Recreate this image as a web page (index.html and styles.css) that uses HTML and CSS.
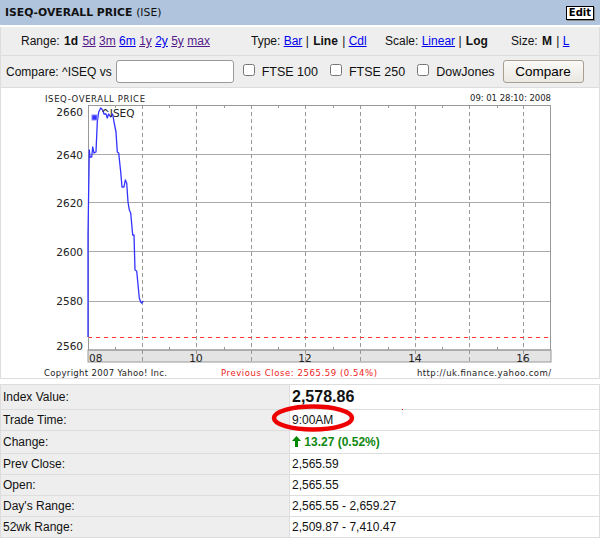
FILE: index.html
```html
<!DOCTYPE html>
<html>
<head>
    <meta charset="UTF-8">
    <title>ISEQ-OVERALL PRICE</title>
    <link rel="stylesheet" href="styles.css">
</head>
<body>
<div class="page">
    <div class="header">
        <h1>ISEQ-OVERALL PRICE <span>(ISE)</span></h1>
        <button class="edit">Edit</button>
    </div>

    <div class="controls">
        <div class="row range-row">
            <div class="group g-range">Range: <b>1d</b>
                <a class="v" href="#">5d</a> <a class="v" href="#">3m</a> <a href="#">6m</a>
                <a class="v" href="#">1y</a> <a href="#">2y</a> <a class="v" href="#">5y</a> <a class="v" href="#">max</a>
            </div>
            <div class="group g-type">Type: <a href="#">Bar</a> | <b>Line</b> | <a href="#">Cdl</a></div>
            <div class="group g-scale">Scale: <a href="#">Linear</a> | <b>Log</b></div>
            <div class="group">Size: <b>M</b> | <a href="#">L</a></div>
        </div>
        <div class="row compare-row">
            <label>Compare: ^ISEQ vs</label>
            <input type="text" class="compare-input">
            <label class="check"><input type="checkbox"> FTSE 100</label>
            <label class="check"><input type="checkbox"> FTSE 250</label>
            <label class="check"><input type="checkbox"> DowJones</label>
            <button class="compare-btn">Compare</button>
        </div>
    </div>

    <div class="chart">
        <svg width="597" height="291" viewBox="1 88 597 291">
            <g class="small">
                <text x="45" y="102" textLength="100">ISEQ-OVERALL PRICE</text>
                <text x="551" y="101" text-anchor="end" textLength="81">09: 01 28:10: 2008</text>
            </g>
            <rect x="88" y="350" width="463" height="12" fill="#e4e4e4" stroke="#999"/>
            <g stroke="#aaa" stroke-width="1">
                <line x1="88" y1="154.5" x2="551" y2="154.5"/>
                <line x1="88" y1="202.5" x2="551" y2="202.5"/>
                <line x1="88" y1="251.5" x2="551" y2="251.5"/>
                <line x1="88" y1="301.5" x2="551" y2="301.5"/>
            </g>
            <g stroke="#999" stroke-dasharray="4 3">
                <line x1="142.5" y1="105" x2="142.5" y2="362"/>
                <line x1="196.5" y1="105" x2="196.5" y2="362"/>
                <line x1="251.5" y1="105" x2="251.5" y2="362"/>
                <line x1="305.5" y1="105" x2="305.5" y2="362"/>
                <line x1="360.5" y1="105" x2="360.5" y2="362"/>
                <line x1="415.5" y1="105" x2="415.5" y2="362"/>
                <line x1="469.5" y1="105" x2="469.5" y2="362"/>
                <line x1="523.5" y1="105" x2="523.5" y2="362"/>
            </g>
            <g stroke="#999">
                <line x1="115.5" y1="105" x2="115.5" y2="108"/><line x1="115.5" y1="347" x2="115.5" y2="350"/>
                <line x1="169.5" y1="105" x2="169.5" y2="108"/><line x1="169.5" y1="347" x2="169.5" y2="350"/>
                <line x1="224.5" y1="105" x2="224.5" y2="108"/><line x1="224.5" y1="347" x2="224.5" y2="350"/>
                <line x1="278.5" y1="105" x2="278.5" y2="108"/><line x1="278.5" y1="347" x2="278.5" y2="350"/>
                <line x1="333.5" y1="105" x2="333.5" y2="108"/><line x1="333.5" y1="347" x2="333.5" y2="350"/>
                <line x1="388.5" y1="105" x2="388.5" y2="108"/><line x1="388.5" y1="347" x2="388.5" y2="350"/>
                <line x1="442.5" y1="105" x2="442.5" y2="108"/><line x1="442.5" y1="347" x2="442.5" y2="350"/>
                <line x1="497.5" y1="105" x2="497.5" y2="108"/><line x1="497.5" y1="347" x2="497.5" y2="350"/>
            </g>
            <line x1="88" y1="337.5" x2="551" y2="337.5" stroke="#ff3333" stroke-dasharray="4 4"/>
            <rect x="88.5" y="105.5" width="462" height="244.5" fill="none" stroke="#999"/>
            <g class="axis" text-anchor="end">
                <text x="83" y="116">2660</text>
                <text x="83" y="159">2640</text>
                <text x="83" y="207">2620</text>
                <text x="83" y="256">2600</text>
                <text x="83" y="305">2580</text>
                <text x="83" y="350">2560</text>
            </g>
            <g class="axis" text-anchor="middle">
                <text x="89" y="362" text-anchor="start">08</text>
                <text x="196" y="362">10</text>
                <text x="305" y="362">12</text>
                <text x="415" y="362">14</text>
                <text x="523" y="362">16</text>
            </g>
            <polyline fill="none" stroke="#3333ff" stroke-width="1.3" stroke-linejoin="round"
                points="88,337 88,235 89.3,150 90,157 91.7,157 92.7,147 94,153 96,152 97.3,122 98.7,112 100.7,108 102.7,110 104,114 106,114 107.3,118 108.7,114 110.7,117 112.7,114 114,122 116,132 117.3,152 118.7,153 120.7,172 122,187 124,187 125.3,180 126.7,183 128,202 129.3,210 130.7,213 132.7,235 134,235 135,270 136.7,271 139.3,298 140.7,302 141.7,303 143.3,301"/>
            <rect x="92" y="115" width="5" height="5" fill="#3333ff" stroke="#88f"/>
            <text class="axis" x="101" y="117">^ISEQ</text>
            <g class="small">
                <text x="44" y="376" textLength="123">Copyright 2007 Yahoo! Inc.</text>
                <text x="221" y="376" fill="#ee2222" textLength="156">Previous Close: 2565.59 (0.54%)</text>
                <text x="551" y="376" text-anchor="end" textLength="134">http://uk.finance.yahoo.com/</text>
            </g>
        </svg>
    </div>

    <div class="quote">
        <table>
            <tr class="r-big"><td class="lbl">Index Value:</td><td class="val big">2,578.86</td></tr>
            <tr><td class="lbl">Trade Time:</td><td class="val">9:00AM</td></tr>
            <tr class="r-change"><td class="lbl">Change:</td><td class="val up">
                <svg width="9" height="11" viewBox="0 0 9 11"><path d="M4.5 0 L9 5 L6 5 L6 11 L3 11 L3 5 L0 5 Z" fill="#008800"/></svg>
                13.27 (0.52%)</td></tr>
            <tr><td class="lbl">Prev Close:</td><td class="val">2,565.59</td></tr>
            <tr><td class="lbl">Open:</td><td class="val">2,565.55</td></tr>
            <tr><td class="lbl">Day's Range:</td><td class="val">2,565.55 - 2,659.27</td></tr>
            <tr><td class="lbl">52wk Range:</td><td class="val">2,509.87 - 7,410.47</td></tr>
        </table>
        <svg class="mark" width="100" height="40" viewBox="0 0 100 40">
            <ellipse cx="43" cy="20" rx="39" ry="11.5" fill="none" stroke="#ee0000" stroke-width="4.5"/>
        </svg>
        <span class="dot"></span>
    </div>
</div>
</body>
</html>
```

FILE: styles.css
```css
body {
    margin: 0;
    font-family: "Liberation Sans", Arial, sans-serif;
    font-size: 12px;
    color: #111;
    background: #fff;
}
.page {
    width: 600px;
}
.header {
    height: 25px;
    background-color: #b0c4de;
    display: flex;
    align-items: center;
    justify-content: space-between;
    padding: 0 6px 0 5px;
    margin-bottom: 2px;
}
.header h1 {
    margin: 0;
    font-family: "DejaVu Sans", Verdana, sans-serif;
    font-size: 10.8px;
    font-weight: bold;
}
.header h1 span {
    font-weight: normal;
}
.edit {
    font-family: "DejaVu Sans", Verdana, sans-serif;
    font-size: 10px;
    font-weight: bold;
    background: #fff;
    border: 1px solid #000;
    box-shadow: 1px 1px 0 #888;
    padding: 0 2px;
    height: 14px;
    line-height: 12px;
    margin-top: 1px;
}
.controls {
    background-color: #eeeeee;
    border-left: 1px solid #ddd;
    border-right: 1px solid #ddd;
}
.row {
    display: flex;
    align-items: center;
}
.range-row {
    height: 28px;
    padding-left: 20px;
    border-bottom: 1px solid #dcdcdc;
}
.group {
    white-space: nowrap;
}
.g-range { width: 230px; }
.g-type { width: 134px; }
.g-scale { width: 126px; }
.group b {
    margin: 0 1px;
}
a {
    color: #0000ee;
}
a.v {
    color: #551a8b;
}
.compare-row {
    height: 31px;
    padding-left: 5px;
    border-bottom: 1px solid #dcdcdc;
}
.compare-input {
    width: 112px;
    height: 17px;
    margin: 0 9px 0 4px;
    border: 1px solid #999;
    border-radius: 3px;
    padding: 2px;
}
.check {
    display: flex;
    align-items: center;
    margin-right: 12px;
    font-size: 12.5px;
}
.check input {
    width: 12px;
    height: 12px;
    margin: 0 7px 3px 0;
}
.compare-btn {
    font-family: "Liberation Sans", Arial, sans-serif;
    font-size: 13.5px;
    width: 81px;
    height: 23px;
    border: 1px solid #a89f90;
    border-radius: 3px;
    background: linear-gradient(#faf9f6, #ebe8e2);
    margin-left: -4px;
}
.chart {
    border-left: 1px solid #ddd;
    border-right: 1px solid #ddd;
    border-bottom: 1px solid #ddd;
    height: 290px;
    overflow: hidden;
}
.chart svg {
    display: block;
}
.small {
    font-family: "DejaVu Sans", Verdana, sans-serif;
    font-size: 8.5px;
    fill: #222;
}
.axis {
    font-family: "DejaVu Sans", Verdana, sans-serif;
    font-size: 10.5px;
    fill: #222;
}
.quote {
    position: relative;
    margin-top: 5px;
}
table {
    width: 600px;
    border-collapse: collapse;
    border: 1px solid #ddd;
}
td {
    border-bottom: 1px solid #ddd;
    height: 20px;
    padding: 0 2px;
}
.lbl {
    width: 284px;
    background-color: #eeeeee;
    border-right: 1px solid #ddd;
}
.r-big td { height: 24px; }
.r-change td { height: 22px; }
.big {
    font-size: 16px;
    font-weight: bold;
}
.up {
    color: #118811;
    font-weight: bold;
}
.up svg {
    vertical-align: -1px;
}
.mark {
    position: absolute;
    left: 270px;
    top: 14px;
}
.dot {
    position: absolute;
    left: 402px;
    top: 25px;
    width: 1px;
    height: 1px;
    background: #e00;
}
```
